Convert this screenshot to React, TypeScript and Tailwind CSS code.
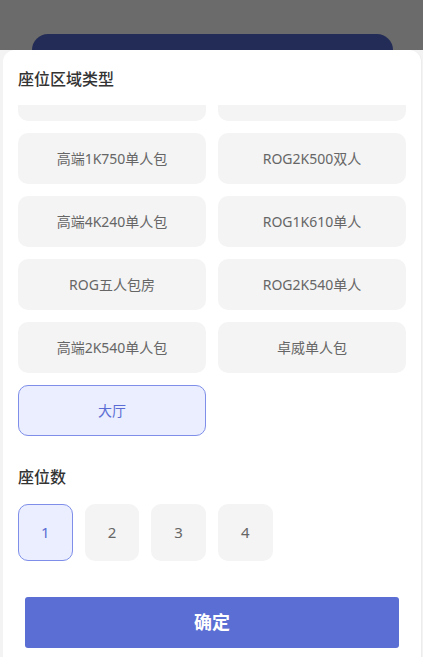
import React from "react";

const zones = [
  "",
  "",
  "高端1K750单人包",
  "ROG2K500双人",
  "高端4K240单人包",
  "ROG1K610单人",
  "ROG五人包房",
  "ROG2K540单人",
  "高端2K540单人包",
  "卓威单人包",
  "大厅",
];

const seats = ["1", "2", "3", "4"];

export default function App() {
  const font = { fontFamily: '"Noto Sans", "Noto Sans CJK SC", sans-serif' };
  return (
    <div
      className="w-[423px] h-[657px] overflow-hidden flex flex-col pl-[3px] pr-[1px] bg-[#f3f3f3]"
      style={font}
    >
      <div className="h-[50px] shrink-0 bg-[#6a6b6a] -ml-[3px] -mr-[1px] pl-[3px] pr-[1px] flex flex-col">
        <div className="mt-[34px] mx-[29px] h-[40px] rounded-t-[26px] bg-[#232c57]" />
      </div>
      <div className="flex-1 bg-white rounded-t-[12px] px-[15px] flex flex-col border-r border-[#ececec]">
        <div className="pt-[18px] text-[16px] leading-[22px] font-medium text-[#333333]">
          座位区域类型
        </div>
        <div className="mt-[15px] h-[343px] overflow-hidden shrink-0">
          <div className="-mt-[35px] grid grid-cols-2 gap-3">
            {zones.map((z, i) => {
              const sel = z === "大厅";
              return (
                <div
                  key={i}
                  className={
                    sel
                      ? "h-[51px] rounded-[10px] border-[1.5px] border-[#7f8ee9] bg-[#eaeefe] text-[#5b6dd4] flex items-center justify-center text-[14px]"
                      : "h-[51px] rounded-[10px] bg-[#f4f4f4] text-[#666666] flex items-center justify-center text-[14px]"
                  }
                >
                  {z}
                </div>
              );
            })}
          </div>
        </div>
        <div className="mt-[18px] text-[16px] leading-[22px] font-medium text-[#333333]">
          座位数
        </div>
        <div className="mt-[16px] grid grid-cols-6 gap-3">
          {seats.map((s) => {
            const sel = s === "1";
            return (
              <div
                key={s}
                className={
                  sel
                    ? "h-[57px] rounded-[10px] border-[1.5px] border-[#7f8ee9] bg-[#eaeefe] text-[#5b6dd4] flex items-center justify-center text-[15px]"
                    : "h-[57px] rounded-[10px] bg-[#f4f4f4] text-[#666666] flex items-center justify-center text-[15px]"
                }
              >
                {s}
              </div>
            );
          })}
        </div>
        <div className="mt-[36px] mx-[7px] h-[51px] rounded-[3px] bg-[#5b6ed4] flex items-center justify-center text-white text-[18px] font-bold">
          确定
        </div>
      </div>
    </div>
  );
}
